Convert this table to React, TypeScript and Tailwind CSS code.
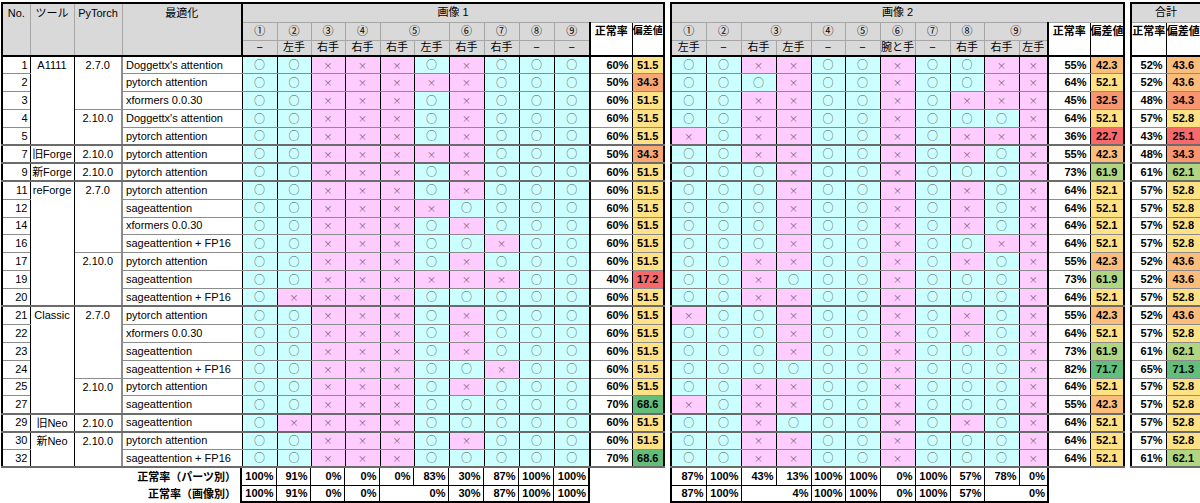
type Row = {
  no: number;
  tool?: [string, number];
  pt?: [string, number];
  opt: string;
  a: string;
  ar: string;
  ad: string;
  ac: string;
  b: string;
  br: string;
  bd: string;
  bc: string;
  tr: string;
  td: string;
  tc: string;
  end?: boolean;
};

// 偏差値 colour scale (Excel 3-colour style)
const SCALE: Record<string, string> = {
  y: "bg-[#ffe285]",
  o1: "bg-[#f9a775]",
  o2: "bg-[#fbbd7c]",
  o3: "bg-[#f8966f]",
  r: "bg-[#f8696b]",
  lg: "bg-[#b1d580]",
  g: "bg-[#63be7b]",
};

const rows: Row[] = [
  { no: 1, tool: ["A1111", 5], pt: ["2.7.0", 3], opt: "Doggettx's attention", a: "ooxxxoxooo", ar: "60%", ad: "51.5", ac: "y", b: "ooxxooxooxx", br: "55%", bd: "42.3", bc: "o2", tr: "52%", td: "43.6", tc: "o2" },
  { no: 2, opt: "pytorch attention", a: "ooxxxxxooo", ar: "50%", ad: "34.3", ac: "o1", b: "oooxooxooxx", br: "64%", bd: "52.1", bc: "y", tr: "52%", td: "43.6", tc: "o2" },
  { no: 3, opt: "xformers 0.0.30", a: "ooxxxoxooo", ar: "60%", ad: "51.5", ac: "y", b: "ooxxooxoxxx", br: "45%", bd: "32.5", bc: "o3", tr: "48%", td: "34.3", tc: "o3" },
  { no: 4, pt: ["2.10.0", 2], opt: "Doggettx's attention", a: "ooxxxoxooo", ar: "60%", ad: "51.5", ac: "y", b: "ooxxooxooox", br: "64%", bd: "52.1", bc: "y", tr: "57%", td: "52.8", tc: "y" },
  { no: 5, opt: "pytorch attention", a: "ooxxxoxooo", ar: "60%", ad: "51.5", ac: "y", b: "xoxxooxoxxx", br: "36%", bd: "22.7", bc: "r", tr: "43%", td: "25.1", tc: "r", end: true },
  { no: 7, tool: ["旧Forge", 1], pt: ["2.10.0", 1], opt: "pytorch attention", a: "ooxxxxxooo", ar: "50%", ad: "34.3", ac: "o1", b: "ooxxooxoxox", br: "55%", bd: "42.3", bc: "o2", tr: "48%", td: "34.3", tc: "o3", end: true },
  { no: 9, tool: ["新Forge", 1], pt: ["2.10.0", 1], opt: "pytorch attention", a: "ooxxxoxooo", ar: "60%", ad: "51.5", ac: "y", b: "oooxooxooox", br: "73%", bd: "61.9", bc: "lg", tr: "61%", td: "62.1", tc: "lg", end: true },
  { no: 11, tool: ["reForge", 7], pt: ["2.7.0", 4], opt: "pytorch attention", a: "ooxxxoxooo", ar: "60%", ad: "51.5", ac: "y", b: "oooxooxoxox", br: "64%", bd: "52.1", bc: "y", tr: "57%", td: "52.8", tc: "y" },
  { no: 12, opt: "sageattention", a: "ooxxxxoooo", ar: "60%", ad: "51.5", ac: "y", b: "oooxooxoxox", br: "64%", bd: "52.1", bc: "y", tr: "57%", td: "52.8", tc: "y" },
  { no: 14, opt: "xformers 0.0.30", a: "ooxxxoxooo", ar: "60%", ad: "51.5", ac: "y", b: "oooxooxoxox", br: "64%", bd: "52.1", bc: "y", tr: "57%", td: "52.8", tc: "y" },
  { no: 16, opt: "sageattention + FP16", a: "ooxxxooxoo", ar: "60%", ad: "51.5", ac: "y", b: "oooxooxooxx", br: "64%", bd: "52.1", bc: "y", tr: "57%", td: "52.8", tc: "y" },
  { no: 17, pt: ["2.10.0", 3], opt: "pytorch attention", a: "ooxxxoxooo", ar: "60%", ad: "51.5", ac: "y", b: "ooxxooxoxox", br: "55%", bd: "42.3", bc: "o2", tr: "52%", td: "43.6", tc: "o2" },
  { no: 19, opt: "sageattention", a: "ooxxxxxxoo", ar: "40%", ad: "17.2", ac: "r", b: "ooxoooxooox", br: "73%", bd: "61.9", bc: "lg", tr: "52%", td: "43.6", tc: "o2" },
  { no: 20, opt: "sageattention + FP16", a: "oxxxxooooo", ar: "60%", ad: "51.5", ac: "y", b: "ooxxooxooox", br: "64%", bd: "52.1", bc: "y", tr: "57%", td: "52.8", tc: "y", end: true },
  { no: 21, tool: ["Classic", 6], pt: ["2.7.0", 4], opt: "pytorch attention", a: "ooxxxoxooo", ar: "60%", ad: "51.5", ac: "y", b: "xooxooxoxox", br: "55%", bd: "42.3", bc: "o2", tr: "52%", td: "43.6", tc: "o2" },
  { no: 22, opt: "xformers 0.0.30", a: "ooxxxoxooo", ar: "60%", ad: "51.5", ac: "y", b: "oooxooxoxox", br: "64%", bd: "52.1", bc: "y", tr: "57%", td: "52.8", tc: "y" },
  { no: 23, opt: "sageattention", a: "ooxxxoxooo", ar: "60%", ad: "51.5", ac: "y", b: "oooxooxooox", br: "73%", bd: "61.9", bc: "lg", tr: "61%", td: "62.1", tc: "lg" },
  { no: 24, opt: "sageattention + FP16", a: "ooxxxooxoo", ar: "60%", ad: "51.5", ac: "y", b: "ooooooxooox", br: "82%", bd: "71.7", bc: "g", tr: "65%", td: "71.3", tc: "g" },
  { no: 25, pt: ["2.10.0", 2], opt: "pytorch attention", a: "ooxxxoxooo", ar: "60%", ad: "51.5", ac: "y", b: "ooxxooxooox", br: "64%", bd: "52.1", bc: "y", tr: "57%", td: "52.8", tc: "y" },
  { no: 27, opt: "sageattention", a: "ooxxxooooo", ar: "70%", ad: "68.6", ac: "g", b: "xoxxooxooox", br: "55%", bd: "42.3", bc: "o2", tr: "57%", td: "52.8", tc: "y", end: true },
  { no: 29, tool: ["旧Neo", 1], pt: ["2.10.0", 1], opt: "sageattention", a: "oxxxxooooo", ar: "60%", ad: "51.5", ac: "y", b: "ooxoooxoxox", br: "64%", bd: "52.1", bc: "y", tr: "57%", td: "52.8", tc: "y", end: true },
  { no: 30, tool: ["新Neo", 2], pt: ["2.10.0", 2], opt: "pytorch attention", a: "ooxxxoxooo", ar: "60%", ad: "51.5", ac: "y", b: "ooxxooxooox", br: "64%", bd: "52.1", bc: "y", tr: "57%", td: "52.8", tc: "y" },
  { no: 32, opt: "sageattention + FP16", a: "ooxxxooooo", ar: "70%", ad: "68.6", ac: "g", b: "ooxxooxooox", br: "64%", bd: "52.1", bc: "y", tr: "61%", td: "62.1", tc: "lg", end: true },
];

const W1 = [35, 34, 34, 35, 34, 35, 35, 35, 35, 36];
const W2 = [35, 35, 35, 35, 34, 35, 35, 35, 34, 35, 29];

const sumA1 = ["100%", "91%", "0%", "0%", "0%", "83%", "30%", "87%", "100%", "100%"];
const sumA2: [string, number][] = [["100%", 1], ["91%", 1], ["0%", 1], ["0%", 1], ["0%", 2], ["30%", 1], ["87%", 1], ["100%", 1], ["100%", 1]];
const sumB1 = ["87%", "100%", "43%", "13%", "100%", "100%", "0%", "100%", "57%", "78%", "0%"];
const sumB2: [string, number][] = [["87%", 1], ["100%", 1], ["4%", 2], ["100%", 1], ["100%", 1], ["0%", 1], ["100%", 1], ["57%", 1], ["0%", 2]];

const hd = "bg-[#d9d9d9] border border-[#a6a6a6] font-normal p-0 text-center leading-none whitespace-nowrap overflow-hidden";
const hdRate = "p-0 pt-[3px] align-top font-bold bg-white border border-black whitespace-nowrap overflow-hidden leading-none";
const line = (end?: boolean) =>
  end ? "border-b-2 border-b-[#6b6b6b]" : "border-b border-b-[#8c8c8c]";

function Mark({ m, end }: { m: string; end?: boolean }) {
  const ok = m === "o";
  return (
    <td
      className={`p-0 text-center leading-none border-x border-x-black ${line(end)} ${
        ok ? "bg-[#ccffff]" : "bg-[#ffccff]"
      }`}
    >
      {ok ? (
        <span className="font-['Noto_Sans_CJK_JP',sans-serif] text-[11px] text-[#555]">○</span>
      ) : (
        <span className="font-['Noto_Sans_CJK_JP',sans-serif] text-[9px] text-[#7a5a7a]">×</span>
      )}
    </td>
  );
}

function Rate({ v, end, thick }: { v: string; end?: boolean; thick?: boolean }) {
  return (
    <td
      className={`p-0 pr-[3px] text-right font-bold leading-none bg-white border-x border-x-black ${line(end)} ${
        thick ? "border-l-2" : ""
      }`}
    >
      {v}
    </td>
  );
}

function Dev({ v, c, end }: { v: string; c: string; end?: boolean }) {
  return (
    <td className={`p-0 text-center font-bold leading-none border-x border-x-black ${line(end)} ${SCALE[c]}`}>
      {v}
    </td>
  );
}

function Summary({
  widths,
  lead,
  top,
  bottom,
  width,
}: {
  widths: number[];
  lead?: boolean;
  top: string[];
  bottom: [string, number][];
  width: number;
}) {
  const cell = "p-0 pr-[2px] text-right font-bold leading-none bg-white border border-black whitespace-nowrap";
  return (
    <table className="table-fixed border-collapse" style={{ width }}>
      <colgroup>
        {lead && <col style={{ width: 240 }} />}
        {widths.map((w, i) => (
          <col key={i} style={{ width: w }} />
        ))}
      </colgroup>
      <tbody>
        <tr className="h-[17px]">
          {lead && <td className="p-0 pr-[4px] text-right font-bold border-0 whitespace-nowrap">正常率（パーツ別）</td>}
          {top.map((v, i) => (
            <td
              key={i}
              className={`${cell} border-t-0 ${i === 0 ? "border-l-2" : ""} ${i === top.length - 1 ? "border-r-2" : ""}`}
            >
              {v}
            </td>
          ))}
        </tr>
        <tr className="h-[17px]">
          {lead && <td className="p-0 pr-[4px] text-right font-bold border-0 whitespace-nowrap">正常率（画像別）</td>}
          {bottom.map(([v, s], i) => (
            <td
              key={i}
              colSpan={s}
              className={`${cell} border-b-2 ${i === 0 ? "border-l-2" : ""} ${
                i === bottom.length - 1 ? "border-r-2" : ""
              }`}
            >
              {v}
            </td>
          ))}
        </tr>
      </tbody>
    </table>
  );
}

export default function App() {
  const ptEnd = (idx: number, span: number) => rows[idx + span - 1].end;
  return (
    <div className="min-h-screen bg-white text-black text-[11px] font-['Liberation_Sans','Noto_Sans_CJK_JP',sans-serif]">
      <div className="flex items-start gap-[5px] pt-[2px] pl-[1px]">
        {/* 画像1 + 行見出し */}
        <div className="flex flex-col">
          <table className="table-fixed border-collapse border-2 border-black w-[663px]">
            <colgroup>
              {[28, 44, 48, 120, ...W1, 42, 32].map((w, i) => (
                <col key={i} style={{ width: w }} />
              ))}
            </colgroup>
            <thead>
              <tr className="h-[19px]">
                {["No.", "ツール", "PyTorch", "最適化"].map((t) => (
                  <th key={t} rowSpan={3} className={`${hd} align-top pt-[4px] border-b-2 border-b-black`}>
                    {t}
                  </th>
                ))}
                <th colSpan={12} className={`${hd} border-l-2 border-l-black`}>画像 1</th>
              </tr>
              <tr className="h-[18px]">
                {["①", "②", "③", "④"].map((t, i) => (
                  <th key={t} className={`${hd} ${i === 0 ? "border-l-2 border-l-black" : ""}`}>{t}</th>
                ))}
                <th colSpan={2} className={hd}>⑤</th>
                {["⑥", "⑦", "⑧", "⑨"].map((t) => (
                  <th key={t} className={hd}>{t}</th>
                ))}
                <th rowSpan={2} className={`${hdRate} border-l-2 border-b-2`}>正常率</th>
                <th rowSpan={2} className={`${hdRate} border-b-2 text-[10px]`}>偏差値</th>
              </tr>
              <tr className="h-[16px]">
                {["−", "左手", "右手", "右手", "右手", "左手", "右手", "右手", "−", "−"].map((t, i) => (
                  <th key={i} className={`${hd} border-b-2 border-b-black ${i === 0 ? "border-l-2 border-l-black" : ""}`}>
                    {t}
                  </th>
                ))}
              </tr>
            </thead>
            <tbody>
              {rows.map((r, idx) => (
                <tr key={r.no} className="h-[17.9px]">
                  <td className={`p-0 pr-[2px] text-right leading-none bg-white border-x border-x-black ${line(r.end)}`}>{r.no}</td>
                  {r.tool && (
                    <td
                      rowSpan={r.tool[1]}
                      className="p-0 pt-[3px] align-top text-center leading-none whitespace-nowrap bg-white border-x border-x-black border-b-2 border-b-[#6b6b6b]"
                    >
                      {r.tool[0]}
                    </td>
                  )}
                  {r.pt && (
                    <td
                      rowSpan={r.pt[1]}
                      className={`p-0 pt-[3px] align-top text-center leading-none bg-white border-x border-x-black ${line(
                        ptEnd(idx, r.pt[1])
                      )}`}
                    >
                      {r.pt[0]}
                    </td>
                  )}
                  <td className={`p-0 pl-[3px] text-left leading-none whitespace-nowrap bg-white border-l-2 border-l-[#8c8c8c] border-r border-r-black ${line(r.end)}`}>
                    {r.opt}
                  </td>
                  {r.a.split("").map((m, i) => (
                    <Mark key={i} m={m} end={r.end} />
                  ))}
                  <Rate v={r.ar} end={r.end} thick />
                  <Dev v={r.ad} c={r.ac} end={r.end} />
                </tr>
              ))}
            </tbody>
          </table>
          <Summary widths={W1} lead top={sumA1} bottom={sumA2} width={588} />
        </div>

        {/* 画像2 */}
        <div className="flex flex-col">
          <table className="table-fixed border-collapse border-2 border-black w-[453px]">
            <colgroup>
              {[...W2, 42, 34].map((w, i) => (
                <col key={i} style={{ width: w }} />
              ))}
            </colgroup>
            <thead>
              <tr className="h-[19px]">
                <th colSpan={13} className={hd}>画像 2</th>
              </tr>
              <tr className="h-[18px]">
                <th className={hd}>①</th>
                <th className={hd}>②</th>
                <th colSpan={2} className={hd}>③</th>
                {["④", "⑤", "⑥", "⑦", "⑧"].map((t) => (
                  <th key={t} className={hd}>{t}</th>
                ))}
                <th colSpan={2} className={hd}>⑨</th>
                <th rowSpan={2} className={`${hdRate} border-l-2 border-b-2`}>正常率</th>
                <th rowSpan={2} className={`${hdRate} border-b-2`}>偏差値</th>
              </tr>
              <tr className="h-[16px]">
                {["左手", "−", "右手", "左手", "−", "−", "腕と手", "−", "右手", "右手", "左手"].map((t, i) => (
                  <th key={i} className={`${hd} border-b-2 border-b-black`}>
                    {t}
                  </th>
                ))}
              </tr>
            </thead>
            <tbody>
              {rows.map((r) => (
                <tr key={r.no} className="h-[17.9px]">
                  {r.b.split("").map((m, i) => (
                    <Mark key={i} m={m} end={r.end} />
                  ))}
                  <Rate v={r.br} end={r.end} thick />
                  <Dev v={r.bd} c={r.bc} end={r.end} />
                </tr>
              ))}
            </tbody>
          </table>
          <Summary widths={W2} top={sumB1} bottom={sumB2} width={377} />
        </div>

        {/* 合計 */}
        <table className="table-fixed border-collapse border-2 border-black w-[70px]">
          <colgroup>
            <col style={{ width: 35 }} />
            <col style={{ width: 35 }} />
          </colgroup>
          <thead>
            <tr className="h-[19px]">
              <th colSpan={2} className={`${hd} font-bold`}>合計</th>
            </tr>
            <tr className="h-[18px]">
              <th className={`${hdRate} border-b-0`}>正常率</th>
              <th className={`${hdRate} border-b-0`}>偏差値</th>
            </tr>
            <tr className="h-[16px]">
              <th className="p-0 bg-white border border-black border-t-0 border-b-2" />
              <th className="p-0 bg-white border border-black border-t-0 border-b-2" />
            </tr>
          </thead>
          <tbody>
            {rows.map((r) => (
              <tr key={r.no} className="h-[17.9px]">
                <Rate v={r.tr} end={r.end} />
                <Dev v={r.td} c={r.tc} end={r.end} />
              </tr>
            ))}
          </tbody>
        </table>
      </div>
    </div>
  );
}
